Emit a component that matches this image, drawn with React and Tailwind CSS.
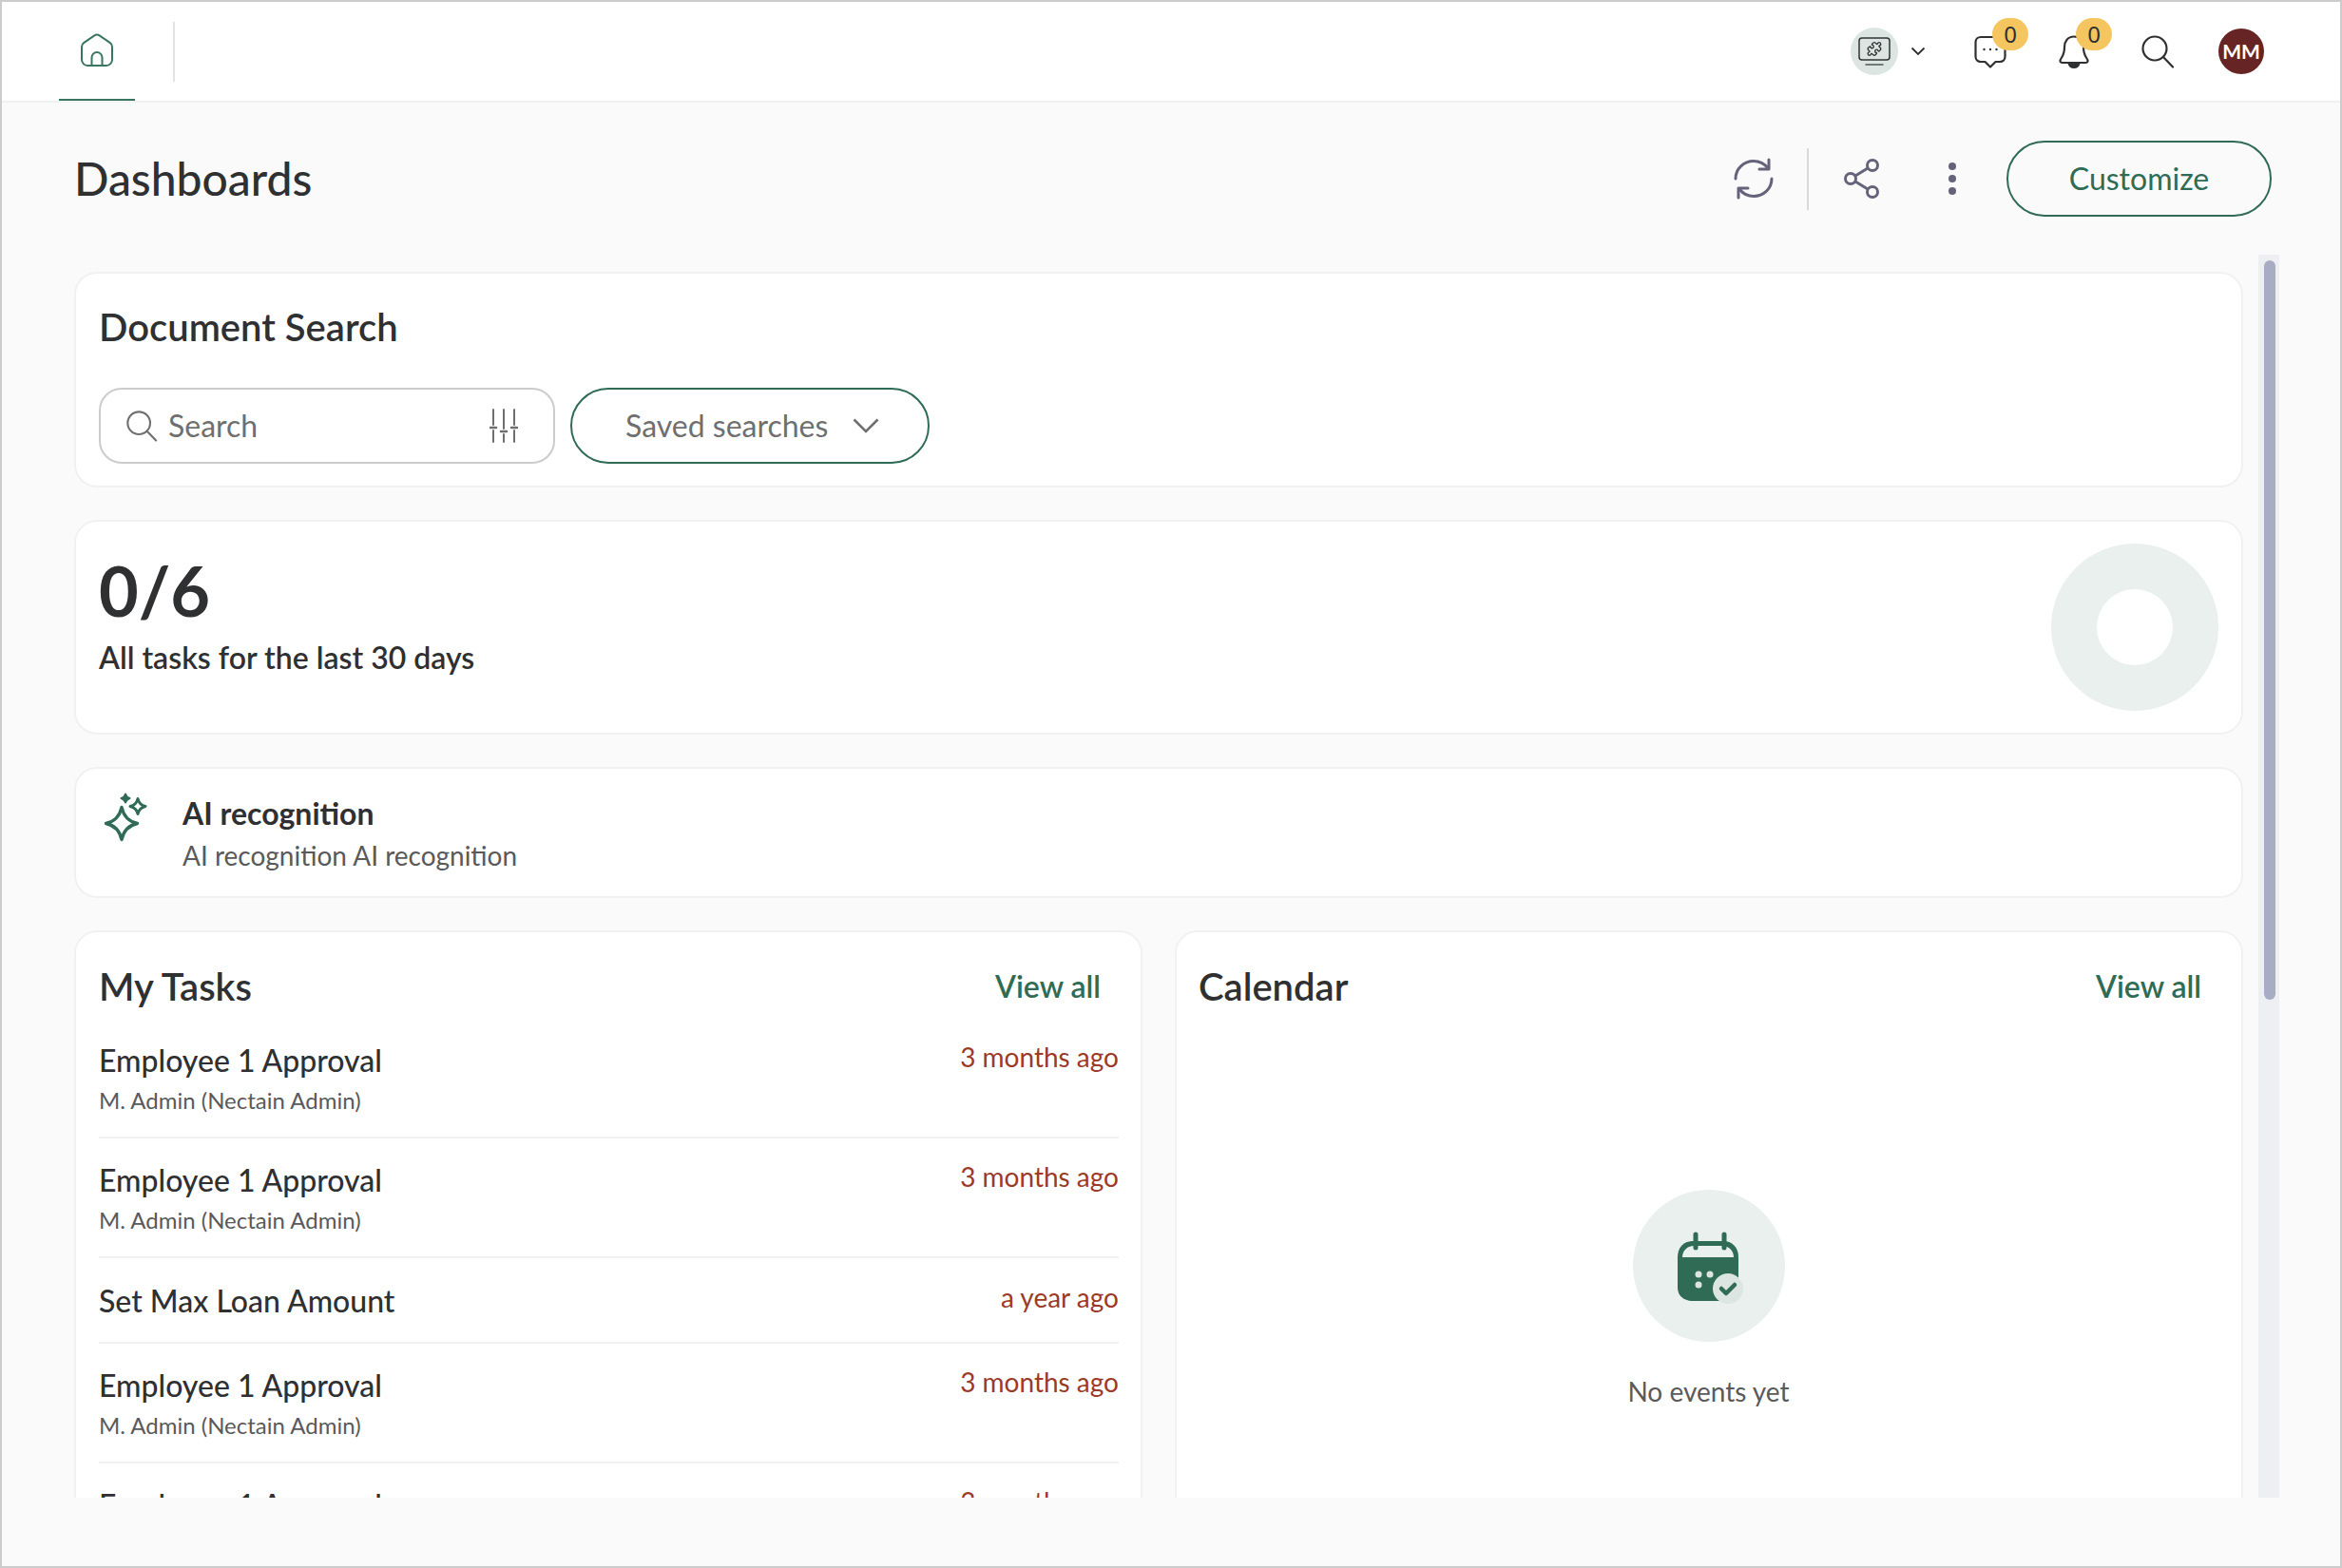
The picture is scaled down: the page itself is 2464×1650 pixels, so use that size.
const tasks = [
  { title: "Employee 1 Approval", sub: "M. Admin (Nectain Admin)", time: "3 months ago" },
  { title: "Employee 1 Approval", sub: "M. Admin (Nectain Admin)", time: "3 months ago" },
  { title: "Set Max Loan Amount", time: "a year ago" },
  { title: "Employee 1 Approval", sub: "M. Admin (Nectain Admin)", time: "3 months ago" },
  { title: "Employee 1 Approval", sub: "M. Admin (Nectain Admin)", time: "3 months ago" },
];

function HomeIcon() {
  return (
    <svg width="36" height="36" viewBox="0 0 36 36" fill="none" stroke="#3a7560" strokeWidth="2">
      <path d="M15 2.6c1.8-1.2 4.2-1.2 6 0l10.6 7.2c1.5 1 2.4 2.7 2.4 4.5v13.4c0 3.4-2.7 6.2-6 6.2H8c-3.3 0-6-2.8-6-6.2V14.300c0-1.800.9-3.500 2.400-4.500z" />
      <path d="M12.500 34v-8.500a5.500 5.500 0 0 1 11 0V34" />
    </svg>
  );
}

function PuzzleMonitorIcon() {
  return (
    <svg width="34" height="30" viewBox="0 0 34 30" fill="none" stroke="#2f3436" strokeWidth="1.500" strokeLinejoin="round">
      <rect x="1" y="1" width="32" height="23" rx="3" />
      <path d="M7.500 29h19" stroke="#6f7a78" strokeWidth="2" />
      <g transform="translate(8.800 4.300) scale(0.68)" strokeWidth="2">
        <path d="M15.390 4.390a1 1 0 0 0 1.680-.474 2.500 2.500 0 1 1 3.014 3.015 1 1 0 0 0-.474 1.680l1.683 1.682a2.414 2.414 0 0 1 0 3.414L19.610 15.390a1 1 0 0 1-1.680-.474 2.500 2.500 0 1 0-3.014 3.015 1 1 0 0 1 .474 1.680l-1.683 1.682a2.414 2.414 0 0 1-3.414 0L8.610 19.610a1 1 0 0 0-1.680.474 2.500 2.500 0 1 1-3.014-3.015 1 1 0 0 0 .474-1.680l-1.683-1.682a2.414 2.414 0 0 1 0-3.414L4.390 8.610a1 1 0 0 1 1.680.474 2.500 2.500 0 1 0 3.014-3.015 1 1 0 0 1-.474-1.680l1.683-1.682a2.414 2.414 0 0 1 3.414 0z" />
      </g>
    </svg>
  );
}

function ChatIcon() {
  return (
    <svg width="40" height="40" viewBox="0 0 40 40" fill="none" stroke="#2f3032" strokeWidth="2.200" strokeLinejoin="round">
      <path d="M10 5h20c3.300 0 5.500 2.300 5.500 5.500v15c0 3.200-2.200 5.500-5.500 5.500h-4.500L20 36.500 14.500 31H10c-3.300 0-5.500-2.300-5.500-5.500v-15C4.500 7.300 6.700 5 10 5z" />
      <circle cx="13.500" cy="18" r="1.200" fill="#2f3032" stroke="none" />
      <circle cx="20" cy="18" r="1.200" fill="#2f3032" stroke="none" />
      <circle cx="26.500" cy="18" r="1.200" fill="#2f3032" stroke="none" />
    </svg>
  );
}

function BellIcon() {
  return (
    <svg width="40" height="40" viewBox="0 0 40 40" fill="none" stroke="#2f3032" strokeWidth="2.200" strokeLinejoin="round">
      <path d="M20 4.500c-6.500 0-10 5-10 11 0 4.500-.8 8-3.200 11.500-1.500 2.200-2.300 4.500.7 5h25c3-.5 2.200-2.800.7-5C30.800 23.500 30 20 30 15.500c0-6-3.500-11-10-11z" />
      <path d="M14.500 32.500h11c-.8 3-3 4.500-5.500 4.500s-4.700-1.500-5.500-4.500z" fill="#2f3032" />
    </svg>
  );
}

function SearchIcon({ size = 36, color = "#2f3032", width = 2.200 }) {
  return (
    <svg width={size} height={size} viewBox="0 0 36 36" fill="none" stroke={color} strokeWidth={width} strokeLinecap="round">
      <circle cx="15" cy="15" r="12.500" />
      <path d="M24 24l10 10.500" />
    </svg>
  );
}

function RefreshIcon() {
  return (
    <svg width="46" height="46" viewBox="0 0 46 46" fill="none" stroke="#65637a" strokeWidth="3" strokeLinecap="round" strokeLinejoin="round">
      <path d="M4 23C4 12.500 12.500 4.500 23 4.500c6.500 0 11.500 3 15 7.500" />
      <path d="M39 3v10h-10" />
      <path d="M42 23c0 10.500-8.500 18.500-19 18.500-6.500 0-11.500-3-15-7.500" />
      <path d="M7 43V33h10" />
    </svg>
  );
}

function ShareIcon() {
  return (
    <svg width="40" height="44" viewBox="0 0 40 44" fill="none" stroke="#65637a" strokeWidth="3">
      <circle cx="8" cy="22" r="5.500" />
      <circle cx="31" cy="8" r="5.500" />
      <circle cx="31" cy="36" r="5.500" />
      <path d="M13 19l13-8M13 25l13 8" />
    </svg>
  );
}

function SlidersIcon() {
  return (
    <svg width="30" height="36" viewBox="0 0 30 36" fill="none" stroke="#6f6f6f" strokeWidth="2" strokeLinecap="round">
      <path d="M4 1v16M4 23v12M15 1v20M15 27v8M26 1v16M26 23v12" />
      <path d="M1 20h6M12 24h6M23 20h6" strokeWidth="2.600" />
    </svg>
  );
}

function SparkleIcon() {
  return (
    <svg width="52" height="56" viewBox="0 0 52 56" fill="none" stroke="#2f6b55" strokeWidth="3.400" strokeLinejoin="round">
      <path d="M20 15.500Q23 29.500 36.500 32.500 23 35.500 20 49.500 17 35.500 3.500 32.500 17 29.500 20 15.500z" />
      <path d="M37 6.500Q38.500 13 45 14.500 38.500 16 37 22.500 35.500 16 29 14.500 35.500 13 37 6.500z" strokeWidth="3" />
      <path d="M24 1.500Q25 5 28.500 6 25 7 24 10.500 23 7 19.500 6 23 5 24 1.500z" fill="#2f6b55" strokeWidth="2" />
    </svg>
  );
}

function CalendarIcon() {
  return (
    <svg className="ml-[3px] mt-[3px]" width="72" height="76" viewBox="0 0 72 76" fill="none">
      <path d="M2 27c0-11 7-17 16-17h32c9 0 16 6 16 17v32c0 9-7 14-16 14H18C9 73 2 68 2 59z" fill="#2f6b55" />
      <path d="M7 27c0-7 5-12 12-12h30c7 0 12 5 12 12z" fill="#e9f0ee" />
      <path d="M21 3v14M51 3v14" stroke="#2f6b55" strokeWidth="5" strokeLinecap="round" />
      <circle cx="24" cy="45" r="3.500" fill="#dce5e2" />
      <circle cx="36" cy="45" r="3.500" fill="#dce5e2" />
      <circle cx="24" cy="56" r="3.500" fill="#dce5e2" />
      <circle cx="55" cy="60" r="16" fill="#dce5e2" />
      <path d="M48 60l5 5 9-9" stroke="#2f6b55" strokeWidth="4.500" strokeLinecap="round" strokeLinejoin="round" />
    </svg>
  );
}

function Badge() {
  return (
    <span className="absolute left-[22px] top-[-15px] flex h-[34px] w-[38px] items-center justify-center rounded-full bg-[#f5c55f] font-['Noto_Sans',sans-serif] text-[24px] leading-none text-[#2f3032]">
      0
    </span>
  );
}

function Card({ className, children }) {
  return (
    <div className={`rounded-[24px] border-2 border-[#f0f1f1] bg-white ${className}`}>{children}</div>
  );
}

export default function App() {
  return (
    <div className="flex h-[1650px] w-[2464px] flex-col overflow-hidden border-2 border-[#cccccc] bg-[#fafafa] font-['Lato',sans-serif] text-[#2f3032]">
      <header className="flex h-[106px] shrink-0 items-center justify-between border-b-2 border-[#f0f1f1] bg-white">
        <div className="flex h-full items-center">
          <div className="ml-[60px] flex h-full w-[80px] items-center justify-center border-b-2 border-[#3a7560]">
            <HomeIcon />
          </div>
          <div className="ml-[40px] h-[63px] w-[2px] bg-[#e3e3e3]" />
        </div>
        <div className="mr-[80px] flex items-center">
          <div className="flex h-[50px] w-[50px] items-center justify-center rounded-full bg-[#dce5e2]">
            <PuzzleMonitorIcon />
          </div>
          <svg className="ml-[13px]" width="16" height="10" viewBox="0 0 16 10" fill="none" stroke="#2f3032" strokeWidth="1.800">
            <path d="M1.500 1.500L8 8l6.500-6.500" />
          </svg>
          <div className="relative ml-[48px] h-[40px] w-[40px]">
            <ChatIcon />
            <Badge />
          </div>
          <div className="relative ml-[48px] h-[40px] w-[40px]">
            <BellIcon />
            <Badge />
          </div>
          <div className="ml-[50px] flex h-[40px] w-[36px] items-center">
            <SearchIcon />
          </div>
          <div className="ml-[46px] flex h-[48px] w-[48px] items-center justify-center rounded-full bg-[#662524] text-[21px] font-bold text-white">
            MM
          </div>
        </div>
      </header>

      <div className="flex h-[160px] shrink-0 items-center justify-between pl-[76px] pr-[72px]">
        <h1 className="text-[48px] font-medium leading-none">Dashboards</h1>
        <div className="flex items-center">
          <RefreshIcon />
          <div className="ml-[33px] h-[65px] w-[2px] bg-[#d9d9d9]" />
          <div className="ml-[36px]">
            <ShareIcon />
          </div>
          <div className="ml-[71px] flex w-[10px] flex-col gap-[5px]">
            <span className="h-[8px] w-[8px] rounded-full bg-[#65637a]" />
            <span className="h-[8px] w-[8px] rounded-full bg-[#65637a]" />
            <span className="h-[8px] w-[8px] rounded-full bg-[#65637a]" />
          </div>
          <button className="ml-[51px] flex h-[80px] w-[279px] items-center justify-center rounded-full border-2 border-[#2f6b55] text-[32px] text-[#2f6b55]">
            Customize
          </button>
        </div>
      </div>

      <div className="flex h-[1308px] shrink-0 overflow-hidden">
        <div className="ml-[76px] flex w-[2282px] shrink-0 flex-col gap-[34px] pt-[18px]">
          <Card className="h-[227px] shrink-0 px-[24px] pt-[32px]">
            <h2 className="text-[40px] font-semibold leading-[48px]">Document Search</h2>
            <div className="mt-[40px] flex gap-[16px]">
              <div className="flex h-[80px] w-[480px] items-center rounded-[24px] border-2 border-[#cccccc] pl-[26px] pr-[37px]">
                <SearchIcon size={34} color="#6f6f6f" />
                <span className="ml-[11px] text-[32px] text-[#6f6f6f]">Search</span>
                <span className="ml-auto">
                  <SlidersIcon />
                </span>
              </div>
              <div className="flex h-[80px] w-[378px] items-center rounded-full border-2 border-[#2f6b55] pl-[56px]">
                <span className="text-[32px] text-[#6f6f6f]">Saved searches</span>
                <svg className="ml-[26px]" width="28" height="16" viewBox="0 0 28 16" fill="none" stroke="#6f6f6f" strokeWidth="2.600">
                  <path d="M1.500 1.500L14 14 26.500 1.500" />
                </svg>
              </div>
            </div>
          </Card>

          <Card className="flex h-[226px] shrink-0 items-center justify-between pl-[24px] pr-[24px]">
            <div className="self-start pt-[32px]">
              <div className="text-[72px] font-bold leading-[80px]">0/6</div>
              <div className="mt-[11px] text-[32px] font-semibold leading-[40px]">All tasks for the last 30 days</div>
            </div>
            <div className="flex h-[176px] w-[176px] items-center justify-center rounded-full bg-[#e9f0ee]">
              <div className="h-[80px] w-[80px] rounded-full bg-white" />
            </div>
          </Card>

          <Card className="flex h-[138px] shrink-0 pl-[28px] pr-[24px]">
            <div className="pt-[25px]">
              <SparkleIcon />
            </div>
            <div className="ml-[32px] pt-[27px]">
              <div className="text-[32px] font-bold leading-[40px]">AI recognition</div>
              <div className="mt-[6px] text-[28px] leading-[36px] text-[#5a5a5a]">AI recognition AI recognition</div>
            </div>
          </Card>

          <div className="grid shrink-0 grid-cols-2 gap-[34px]">
            <Card className="h-[720px] pl-[24px] pr-[23px]">
              <div className="flex h-[91px] items-center justify-between pr-[19px] pt-[22px]">
                <h2 className="text-[40px] font-semibold leading-none">My Tasks</h2>
                <a className="text-[32px] font-semibold text-[#2f6b55]">View all</a>
              </div>
              {tasks.map((task, i) => (
                <div
                  key={i}
                  className={`flex items-start justify-between border-b-2 border-[#f0f1f1] ${task.sub ? "pb-[23px] pt-[26px]" : "pb-[25px] pt-[27px]"}`}
                >
                  <div>
                    <div className="text-[32px] font-medium leading-[36px]">{task.title}</div>
                    {task.sub && <div className="mt-[9px] text-[24px] leading-[30px] text-[#5a5a5a]">{task.sub}</div>}
                  </div>
                  <div className="mt-[-3px] text-[28px] leading-[34px] text-[#9c3a28]">{task.time}</div>
                </div>
              ))}
            </Card>
            <Card className="h-[720px] pl-[23px] pr-[24px]">
              <div className="flex h-[91px] items-center justify-between pr-[18px] pt-[22px]">
                <h2 className="text-[40px] font-semibold leading-none">Calendar</h2>
                <a className="text-[32px] font-semibold text-[#2f6b55]">View all</a>
              </div>
              <div className="flex flex-col items-center pt-[180px]">
                <div className="flex h-[160px] w-[160px] items-center justify-center rounded-full bg-[#e9f0ee]">
                  <CalendarIcon />
                </div>
                <div className="mt-[35px] text-[28px] leading-[34px] text-[#5a5a5a]">No events yet</div>
              </div>
            </Card>
          </div>
        </div>
        <div className="ml-[16px] h-full w-[22px] shrink-0 bg-[#eeeff3] pl-[6px] pt-[6px]">
          <div className="h-[778px] w-[12px] rounded-full bg-[#a9adc4]" />
        </div>
      </div>
    </div>
  );
}
